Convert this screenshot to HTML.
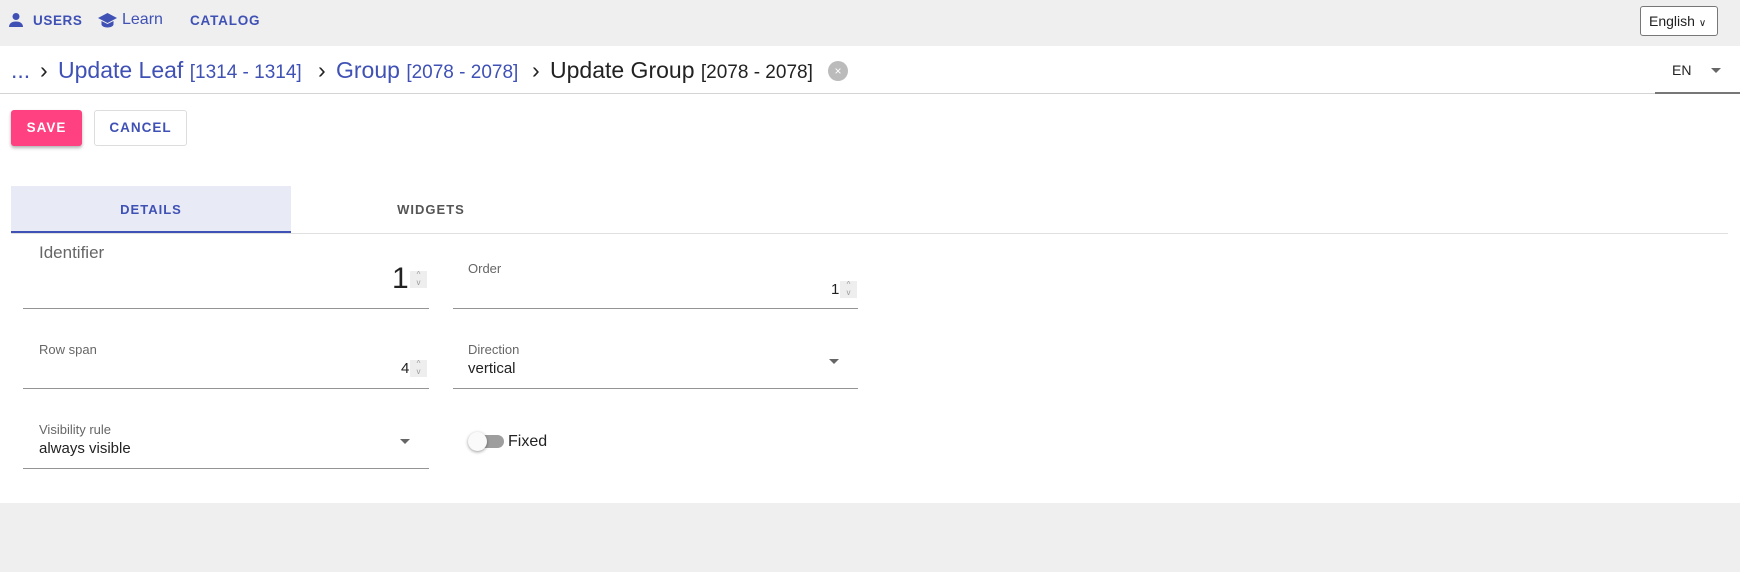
<!DOCTYPE html>
<html><head><meta charset="utf-8"><style>
*{box-sizing:border-box;margin:0;padding:0}
body{width:1740px;height:572px;background:#efefef;font-family:"Liberation Sans",sans-serif;position:relative;overflow:hidden}
.a{position:absolute;white-space:nowrap}
.blue{color:#3f51b5}
.main{position:absolute;left:0;top:46px;width:1740px;height:457px;background:#fff}
.lbl{font-size:13px;color:#666}
.val{font-size:15px;color:#222}
.ul{position:absolute;height:1px;background:#949494}
.spin{position:absolute;width:17px;height:17px;background:#eee;color:#999;font-size:8px;line-height:8px;text-align:center}
.tri{position:absolute;width:0;height:0;border-left:5px solid transparent;border-right:5px solid transparent;border-top:5px solid #666}
.bc{top:57px;font-size:23px;color:#222}
.bc.blue{color:#3f51b5}
.br{font-size:19px}
</style></head><body>
<svg class="a" style="left:9px;top:12px" width="14" height="16" viewBox="0 0 14 16"><circle cx="7" cy="4.5" r="3.5" fill="#3f51b5"/><path d="M0 15c0-4 3.5-5.5 7-5.5s7 1.5 7 5.5z" fill="#3f51b5"/></svg>
<div class="a blue" style="left:33px;top:13px;font-size:13.5px;font-weight:bold;letter-spacing:0.6px">USERS</div>
<svg class="a" style="left:98px;top:12px" width="19" height="16" viewBox="0 0 19 16"><path d="M9.5 1L0 6l9.5 5 9.5-5z" fill="#3f51b5"/><path d="M3.5 9v3.5c0 1.5 3 3 6 3s6-1.5 6-3V9l-6 3z" fill="#3f51b5"/></svg>
<div class="a blue" style="left:122px;top:11px;font-size:16px">Learn</div>
<div class="a blue" style="left:190px;top:13px;font-size:13.5px;font-weight:bold;letter-spacing:0.8px">CATALOG</div>
<div class="a" style="left:1640px;top:6px;width:78px;height:30px;border:1px solid #777;border-radius:3px;background:#fff;font-size:14px;padding:6px 0 0 8px;color:#222">English <span style="font-size:10px">&#8744;</span></div>
<div class="main"></div>
<div class="a bc blue" style="left:11px">...</div>
<div class="a bc" style="left:40px">›</div>
<div class="a bc blue" style="left:58px">Update Leaf <span class="br">[1314 - 1314]</span></div>
<div class="a bc" style="left:318px">›</div>
<div class="a bc blue" style="left:336px">Group <span class="br">[2078 - 2078]</span></div>
<div class="a bc" style="left:532px">›</div>
<div class="a bc" style="left:550px">Update Group <span class="br">[2078 - 2078]</span></div>
<div class="a" style="left:828px;top:61px;width:20px;height:20px;border-radius:50%;background:#bbb;color:#fff;font-size:12px;text-align:center;line-height:20px">×</div>
<div class="a" style="left:0;top:93px;width:1740px;height:1px;background:#d4d4d4"></div>
<div class="a" style="left:1655px;top:92px;width:85px;height:2px;background:#777"></div>
<div class="a" style="left:1672px;top:62px;font-size:14px;color:#222">EN</div>
<div class="tri" style="left:1711px;top:68px"></div>
<div class="a" style="left:11px;top:110px;width:71px;height:36px;background:#ff4081;border-radius:3px;box-shadow:0 2px 3px rgba(0,0,0,.3);color:#fff;font-size:13.5px;font-weight:bold;letter-spacing:1px;text-align:center;line-height:36px">SAVE</div>
<div class="a blue" style="left:94px;top:110px;width:93px;height:36px;border:1px solid #ddd;border-radius:3px;font-size:13.5px;font-weight:bold;letter-spacing:1px;text-align:center;line-height:34px">CANCEL</div>
<div class="a" style="left:11px;top:186px;width:280px;height:47px;background:#e8eaf6;border-bottom:2px solid #3f51b5"></div>
<div class="a" style="left:11px;top:233px;width:1717px;height:1px;background:#e0e0e0"></div>
<div class="a blue" style="left:11px;top:202px;width:280px;text-align:center;font-size:13px;font-weight:bold;letter-spacing:1px">DETAILS</div>
<div class="a" style="left:291px;top:202px;width:280px;text-align:center;font-size:13px;font-weight:bold;letter-spacing:1px;color:#555">WIDGETS</div>

<div class="a" style="left:39px;top:243px;font-size:17px;color:#666">Identifier</div>
<div class="a" style="left:392px;top:262px;font-size:30px;color:#222">1</div>
<div class="spin" style="left:410px;top:271px">^<br>v</div>
<div class="ul" style="left:23px;top:308px;width:406px"></div>

<div class="a lbl" style="left:468px;top:261px">Order</div>
<div class="a val" style="left:831px;top:281px">1</div>
<div class="spin" style="left:840px;top:281px">^<br>v</div>
<div class="ul" style="left:453px;top:308px;width:405px"></div>

<div class="a lbl" style="left:39px;top:342px">Row span</div>
<div class="a val" style="left:401px;top:360px">4</div>
<div class="spin" style="left:410px;top:360px">^<br>v</div>
<div class="ul" style="left:23px;top:388px;width:406px"></div>

<div class="a lbl" style="left:468px;top:342px">Direction</div>
<div class="a val" style="left:468px;top:360px">vertical</div>
<div class="tri" style="left:829px;top:359px"></div>
<div class="ul" style="left:453px;top:388px;width:405px"></div>

<div class="a lbl" style="left:39px;top:422px">Visibility rule</div>
<div class="a val" style="left:39px;top:440px">always visible</div>
<div class="tri" style="left:400px;top:439px"></div>
<div class="ul" style="left:23px;top:468px;width:406px"></div>

<div class="a" style="left:472px;top:435px;width:32px;height:13px;border-radius:7px;background:#9e9e9e"></div>
<div class="a" style="left:468px;top:432px;width:19px;height:19px;border-radius:50%;background:#fafafa;box-shadow:0 1px 3px rgba(0,0,0,.4)"></div>
<div class="a" style="left:508px;top:433px;font-size:16px;color:#222">Fixed</div>
</body></html>
